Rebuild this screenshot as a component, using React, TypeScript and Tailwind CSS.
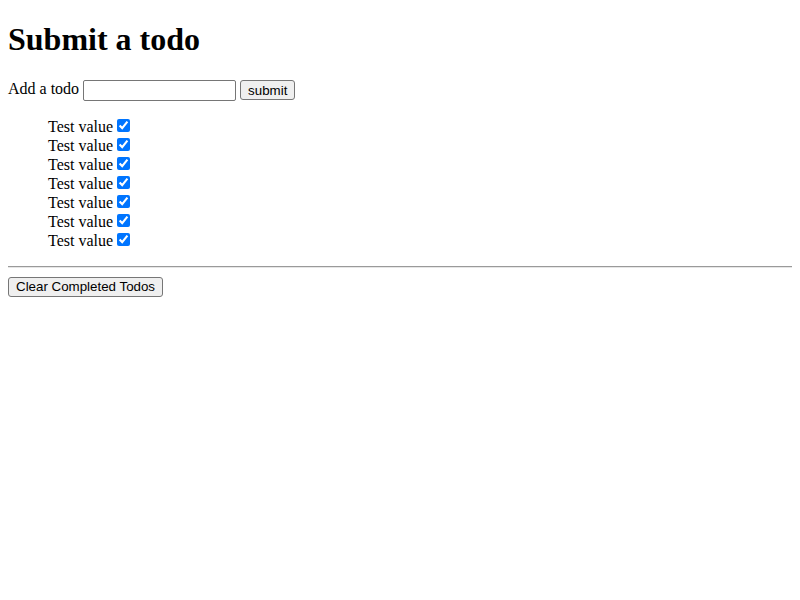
import { useState } from 'react';

const serif = 'font-["Liberation_Serif","Times_New_Roman",serif]';
const sans = 'font-["Liberation_Sans",Arial,sans-serif]';

export default function App() {
  const [todos, setTodos] = useState(
    Array.from({ length: 7 }, (_, i) => ({ id: i, text: 'Test value', done: true }))
  );
  const [draft, setDraft] = useState('');

  return (
    <div className={`mx-2 text-[16px] leading-[normal] text-black ${serif}`}>
      <h1 className="my-[21.44px] text-[32px] font-bold leading-[normal]">Submit a todo</h1>
      <form
        className="h-[21px]"
        onSubmit={(e) => {
          e.preventDefault();
          if (!draft) return;
          setTodos([...todos, { id: Date.now(), text: draft, done: false }]);
          setDraft('');
        }}
      >
        Add a todo{' '}
        <input
          value={draft}
          onChange={(e) => setDraft(e.target.value)}
          className={`h-[21px] w-[153px] rounded-[2px] border border-[#767676] bg-white px-[2px] align-middle text-[13.33px] ${sans}`}
        />{' '}
        <button
          type="submit"
          className={`h-[20px] rounded-[3px] border border-[#767676] bg-[#efefef] px-[7px] align-middle text-[13.33px] leading-none ${sans}`}
        >
          submit
        </button>
      </form>
      <ul className="mt-[15px] mb-[17px] list-none pl-10">
        {todos.map((t) => (
          <li key={t.id} className="h-[19px]">
            {t.text}{' '}
            <input
              type="checkbox"
              checked={t.done}
              onChange={() =>
                setTodos(todos.map((x) => (x.id === t.id ? { ...x, done: !x.done } : x)))
              }
              className="m-[3px_3px_3px_0px] h-[13px] w-[13px] accent-[#0075ff]"
            />
          </li>
        ))}
      </ul>
      <hr className="mt-0 mb-[9px] border-t border-b border-t-[#9a9a9a] border-b-[#e6e6e6]" />
      <button
        onClick={() => setTodos(todos.filter((t) => !t.done))}
        className={`h-[20px] rounded-[3px] border border-[#767676] bg-[#efefef] px-[7px] text-[13.33px] leading-none ${sans}`}
      >
        Clear Completed Todos
      </button>
    </div>
  );
}
